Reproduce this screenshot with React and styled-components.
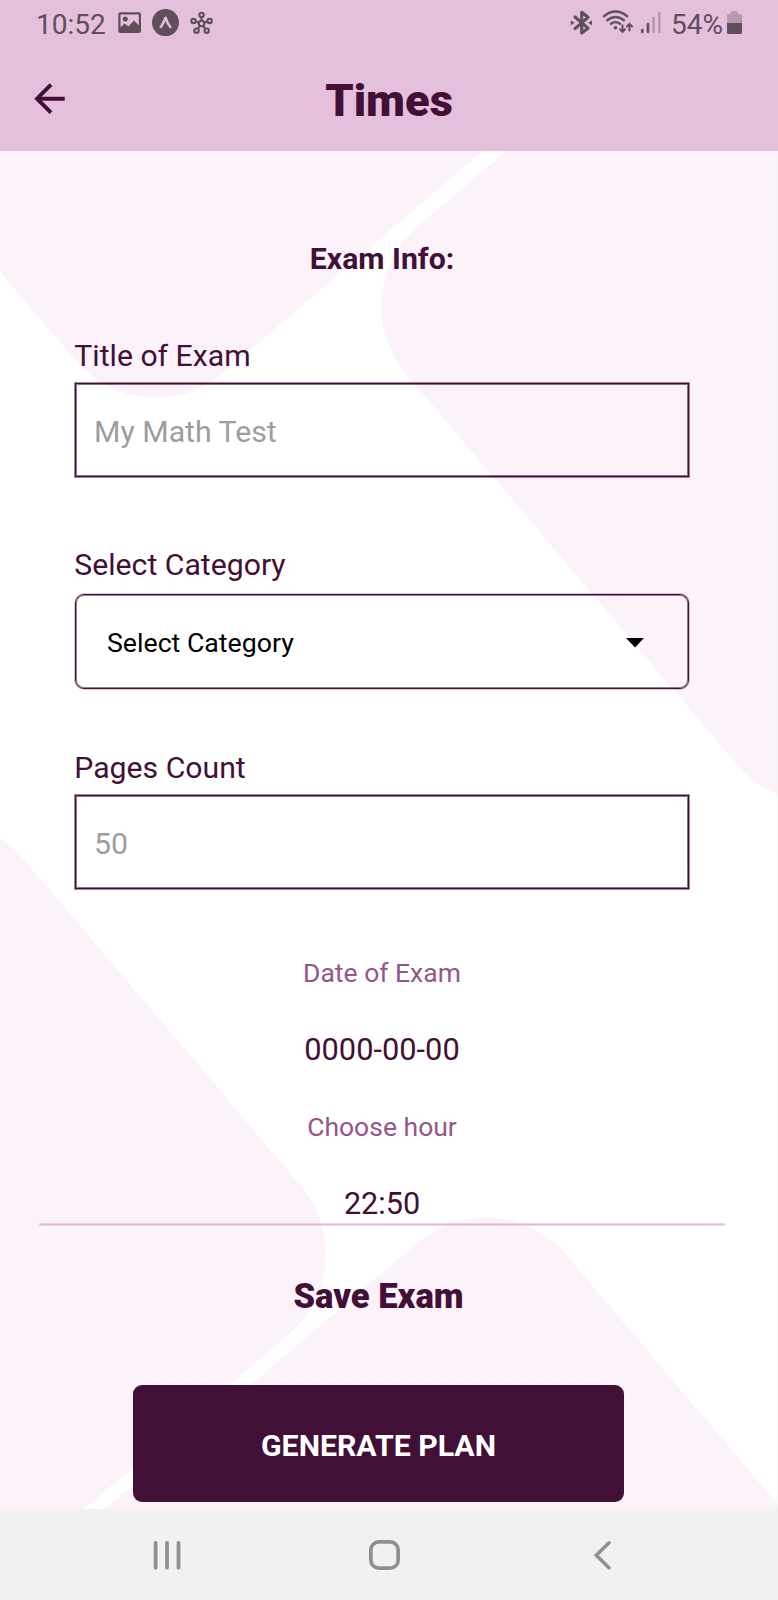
import React from "react";
import styled, { createGlobalStyle } from "styled-components";

const plum = "#420f36";
const pink = "#e4c0dc";
const ink = "#5e4f5b";
const faded = "#b699b0";

const GlobalStyle = createGlobalStyle`
  * { box-sizing: border-box; }
  body { margin: 0; background: #fff; }
  button, input { font: inherit; margin: 0; }
`;

const Screen = styled.div`
  width: 778px;
  height: 1600px;
  display: flex;
  flex-direction: column;
  overflow: hidden;
  font-family: Roboto, "Liberation Sans", sans-serif;
  color: ${plum};
`;

const Header = styled.header`
  height: 151px;
  flex: none;
  background: ${pink};
`;

const StatusBar = styled.div`
  height: 46px;
  padding: 0 36px;
  display: flex;
  justify-content: space-between;
  color: ${ink};
`;

const StatusGroup = styled.div`
  display: flex;
  align-items: flex-start;
  svg { display: block; }
`;

const StatusText = styled.span`
  width: ${(p) => p.$width}px;
  padding-left: ${(p) => p.$indent || 0}px;
  font-size: 28px;
  line-height: 50px;
  white-space: nowrap;
`;

const TitleBar = styled.div`
  height: 105px;
  display: grid;
  grid-template-columns: 100px 1fr 100px;
  align-items: center;
`;

const BackButton = styled.button`
  border: 0;
  padding: 0 0 0 34px;
  background: none;
  text-align: left;
  svg { display: block; }
`;

const Title = styled.h1`
  margin: 0;
  padding-top: 4px;
  text-align: center;
  font-size: 45.2px;
  line-height: 54px;
  font-weight: 900;
`;

const Body = styled.main`
  position: relative;
  height: 1358px;
  flex: none;
`;

const Backdrop = styled.svg`
  position: absolute;
  inset: 0;
`;

const Form = styled.form`
  position: relative;
  display: flex;
  flex-direction: column;
  width: 686px;
  margin-left: 39px;
  padding: 88px 36px 0;
`;

const Line = styled.div`
  height: 40px;
  line-height: 40px;
  margin: ${(p) => p.$gap || 0}px 0 0;
  font-size: ${(p) => p.$size || 30.26}px;
  font-weight: ${(p) => p.$weight || 400};
  color: ${(p) => p.$color || plum};
  text-align: center;
  white-space: nowrap;
`;

const Heading = styled(Line).attrs({ as: "h2" })`
  font-weight: 700;
`;

const Label = styled(Line)`
  font-size: 30.2px;
  text-align: left;
  text-indent: -0.7px;
`;

const SaveLink = styled(Line)`
  padding-right: 7px;
  font-size: 34.6px;
  font-weight: 900;
`;

const outline = `
  border: 1px solid ${plum};
  box-shadow: 0 0 0 1px rgba(66, 15, 54, 0.5), inset 0 0 0 1px rgba(66, 15, 54, 0.6);
  background: transparent;
`;

const Field = styled.input`
  ${outline}
  width: 100%;
  height: 94px;
  margin-top: 7px;
  padding: 2px 18px 0;
  font-size: 30.26px;
  outline: none;
  &::placeholder { color: #9d9d9d; opacity: 1; }
`;

const Picker = styled.div`
  ${outline}
  height: 95px;
  margin-top: 9px;
  padding: 2px 44px 0 31px;
  border-radius: 9px;
  box-shadow: inset 0 0 0 1px rgba(66, 15, 54, 0.55), 0 0 0 1px rgba(66, 15, 54, 0.2);
  display: flex;
  align-items: center;
  justify-content: space-between;
  color: #000;
  font-size: 26.7px;
`;

const Rule = styled.hr`
  width: 684px;
  height: 1px;
  border: 0;
  margin: 0 -35px;
  background: #e1bbd9;
  box-shadow: 0 0 0 1px rgba(225, 187, 217, 0.6);
`;

const Generate = styled.button`
  width: 491px;
  height: 117px;
  margin: 69px 0 0 58px;
  padding: 3px 0 0;
  border: 0;
  border-radius: 9px;
  background: ${plum};
  color: #fff;
  font-size: 30.26px;
  font-weight: 700;
`;

const NavBar = styled.nav`
  height: 91px;
  flex: none;
  padding: 31px 167px 0 153px;
  display: flex;
  justify-content: space-between;
  background: #f1f1f1;
  svg { display: block; }
`;

const HomeIcon = styled.svg`
  margin-right: 6px;
`;

const Shapes = () => (
  <Backdrop width="778" height="1358" viewBox="0 151 778 1358" fill="#fbf2fa">
    <path d="M0 151H482.300L224.500 372.200A105 105 0 0 1 76.500 361.500L0 271.500Z" />
    <path d="M506 151L418.400 226A105 105 0 0 0 406.400 374.400L737 764.500A105 105 0 0 0 778 794.500V151Z" />
    <path d="M0 838.300A105 105 0 0 1 23 858.500L300.900 1186A105 105 0 0 1 289.100 1334.300L84.300 1509H0Z" />
    <path d="M105 1509L418 1242.400A105 105 0 0 1 565.800 1254.500L778 1504.500V1509Z" />
    <rect x="777" y="151" width="1" height="1358" fill="#f4f4f6" opacity=".7" />
  </Backdrop>
);

const NotificationIcons = () => (
  <svg width="100" height="46" viewBox="115 0 100 46" fill="none" stroke={ink}>
    <rect x="119.400" y="13.300" width="20.500" height="18.600" rx="1" strokeWidth="2.200" />
    <circle cx="125.300" cy="19" r="2.500" fill={ink} stroke="none" />
    <path d="M119.500 28L124.700 23.500L128.500 26.500L134 20.500L140 26.500V32H119.500Z" fill={ink} stroke="none" />
    <circle cx="165.500" cy="22.600" r="13.500" fill={ink} stroke="none" />
    <path d="M159.300 27.200C161.500 24 163 20.500 164.300 17.200Q165.500 15.600 166.800 17.200C168 20.500 169.500 24 171.800 27.200Q171 29 169.400 27.800Q167.200 24.800 165.500 21.200Q163.800 24.800 161.700 27.800Q160 29 159.300 27.200Z" fill={pink} stroke="none" />
    <g strokeWidth="2.100">
      <circle cx="201.500" cy="23.500" r="2.800" />
      <circle cx="201.500" cy="14.900" r="2.200" />
      <circle cx="193.500" cy="20.900" r="2.200" />
      <circle cx="209.600" cy="20.900" r="2.200" />
      <circle cx="196.500" cy="30.700" r="2.200" />
      <circle cx="206.700" cy="30.700" r="2.200" />
      <path d="M201.500 17.200V20.800M195.500 21.600L198.900 22.700M207.600 21.600L204.100 22.700M197.900 28.900L199.900 25.800M205.300 28.900L203.100 25.800" />
    </g>
  </svg>
);

const ConnectionIcons = () => (
  <svg width="100" height="46" viewBox="567 0 100 46" fill="none" stroke={ink} strokeLinecap="round">
    <path d="M575 17L588 28.200L581.700 33V12.200L588 17.300L575 28.600" strokeWidth="3.100" strokeLinejoin="round" />
    <path d="M570.800 20.400L574.800 22.800L570.800 25.200ZM592 20.400L588 22.800L592 25.200Z" fill={ink} stroke="none" />
    <path d="M604 16.200Q615.500 7 627.200 16.200M607.300 20.200Q615.500 13.800 623.900 20.200M611 23.700Q615.500 20.600 620 23.700" strokeWidth="2.400" />
    <circle cx="615.500" cy="27.700" r="1.800" fill={ink} stroke="none" />
    <path d="M622.500 25.300V31.500M620 29.300L622.500 31.800L625 29.300M629.500 30.500V24.500M627 26.500L629.500 24L632 26.500" strokeWidth="2" />
    <path d="M642.300 30V32M648 24V32" strokeWidth="2.600" />
    <path d="M653.600 18V32M659.300 13V32" strokeWidth="2.600" stroke={faded} />
  </svg>
);

const BatteryIcon = () => (
  <svg width="15" height="46" viewBox="727 0 15 46">
    <path d="M727 23V15.500Q727 14 728.500 14H731V12.500Q731 11.200 732.300 11.200H736.600Q737.900 11.200 737.900 12.500V14H740.500Q742 14 742 15.500V23Z" fill={faded} />
    <path d="M727 23H742V32.500Q742 34 740.500 34H728.500Q727 34 727 32.500Z" fill={ink} />
  </svg>
);

export default function App() {
  return (
    <>
      <GlobalStyle />
      <Screen>
        <Header>
          <StatusBar>
            <StatusGroup>
              <StatusText $width={79}>10:52</StatusText>
              <NotificationIcons />
            </StatusGroup>
            <StatusGroup>
              <ConnectionIcons />
              <StatusText $width={60} $indent={4}>54%</StatusText>
              <BatteryIcon />
            </StatusGroup>
          </StatusBar>
          <TitleBar>
            <BackButton aria-label="Back">
              <svg width="32" height="32" viewBox="34 82.500 32 32" fill="none" stroke={plum} strokeWidth="3.900">
                <path d="M51 84.200L37 98.200L51 112.200M36.700 98.200H64.700" />
              </svg>
            </BackButton>
            <Title>Times</Title>
          </TitleBar>
        </Header>
        <Body>
          <Shapes />
          <Form>
            <Heading>Exam Info:</Heading>
            <Label $gap={57}>Title of Exam</Label>
            <Field placeholder="My Math Test" />
            <Label $gap={68}>Select Category</Label>
            <Picker>
              Select Category
              <svg width="18" height="10" viewBox="0 0 18 10"><path d="M0 0H18L9 9.500Z" /></svg>
            </Picker>
            <Label $gap={59}>Pages Count</Label>
            <Field placeholder="50" />
            <Line $gap={64} $size={26.5} $color="#94568a">Date of Exam</Line>
            <Line $gap={37} $size={30.8}>0000-00-00</Line>
            <Line $gap={37} $size={26.5} $color="#94568a">Choose hour</Line>
            <Line $gap={37} $size={30.6}>22:50</Line>
            <Rule />
            <SaveLink $gap={51}>Save Exam</SaveLink>
            <Generate type="button">GENERATE PLAN</Generate>
          </Form>
        </Body>
        <NavBar>
          <svg width="28" height="30" viewBox="153 1540 28 30" stroke="#909090" strokeWidth="3.800" strokeLinecap="round">
            <path d="M155.600 1543V1567.700M167 1543V1567.700M178.500 1543V1567.700" />
          </svg>
          <HomeIcon width="31" height="30" viewBox="0 0 31 30" fill="none" stroke="#909090" strokeWidth="3.700">
            <rect x="1.850" y="1.850" width="27.300" height="26.300" rx="8" />
          </HomeIcon>
          <svg width="17" height="30" viewBox="594 1540 17 30" fill="none" stroke="#909090" strokeWidth="3.500" strokeLinecap="round">
            <path d="M609 1542.800L596.300 1555.300L609 1567.800" />
          </svg>
        </NavBar>
      </Screen>
    </>
  );
}
